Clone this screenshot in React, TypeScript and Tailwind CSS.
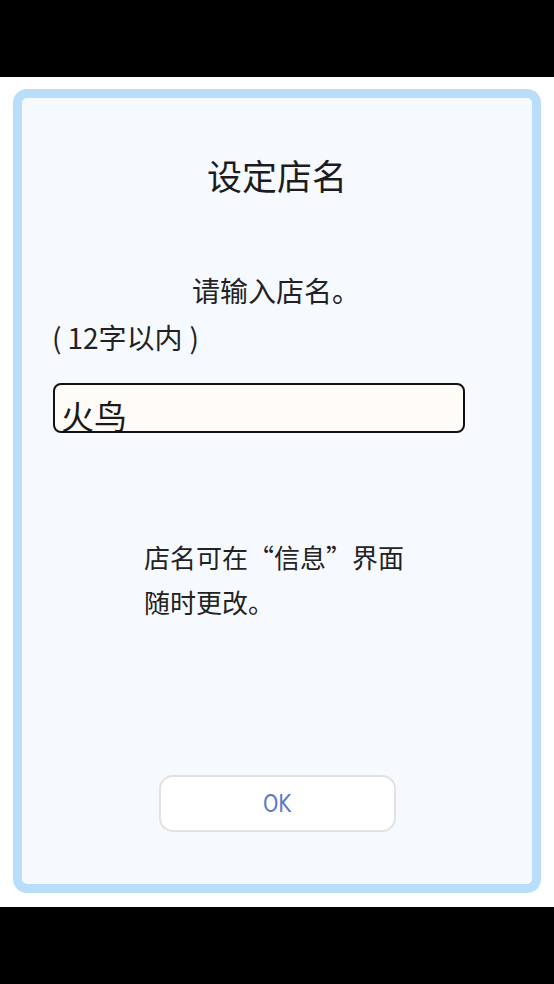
const cjk = { fontFamily: '"Noto Sans CJK SC", "Noto Sans", sans-serif' };

export default function App() {
  return (
    <div className="flex h-[984px] w-[554px] flex-col bg-black" style={cjk}>
      <div className="h-[77px] shrink-0 bg-black" />
      <div className="flex h-[830px] shrink-0 flex-col bg-white px-[13px] pt-[12px]">
        <div className="flex h-[804px] flex-col rounded-[14px] border-[9px] border-[#b8defa] bg-[#f6faff] text-[#222]">
          {/* title */}
          <h1 className="mt-[59px] text-center text-[35px] leading-none font-normal text-[#1c1c1c]">设定店名</h1>

          <p className="mt-[84px] pl-[170px] text-[28px] leading-none">请输入店名。</p>
          <p className="mt-[19px] pl-[30px] text-[28px] leading-none">
            (<span className="ml-[6px] mr-[7px]">12字以内</span>)
          </p>

          {/* name field */}
          <div className="mt-[32px] ml-[31px] h-[50px] w-[412px] overflow-hidden rounded-[8px] border-2 border-[#111] bg-[#fffcf8] pl-[6px] pt-[14px]">
            <span className="block text-[33px] leading-none text-[#1a1a1a]">火鸟</span>
          </div>

          <div className="mt-[101px] pl-[122px] text-[26px] leading-[45px]">
            <p>店名可在“信息”界面</p>
            <p>随时更改。</p>
          </div>

          <button className="mx-auto mt-[151px] flex h-[57px] w-[237px] items-center justify-center rounded-[14px] border-2 border-[#e2e2e2] bg-white">
            <span
              className="inline-block scale-x-[0.78] text-[25px] leading-none text-[#5b78c9]"
              style={{ fontFamily: '"DejaVu Sans", sans-serif' }}
            >
              OK
            </span>
          </button>
        </div>
      </div>
      <div className="h-[77px] shrink-0 bg-black" />
    </div>
  );
}
